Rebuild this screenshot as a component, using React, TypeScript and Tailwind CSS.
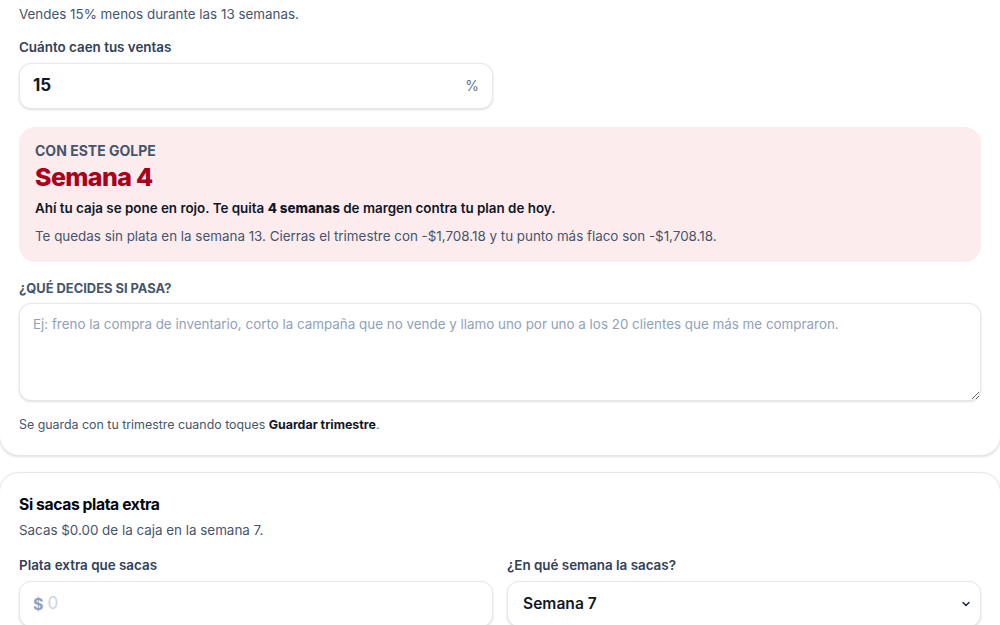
import { ChevronDown } from "lucide-react";

const font = { fontFamily: "Inter, 'Noto Sans', sans-serif" };

function Field({ label, children }: { label: string; children: React.ReactNode }) {
  return (
    <div className="flex flex-col">
      <label className="mb-1.5 text-[13.4px] leading-5 font-semibold text-slate-700">{label}</label>
      {children}
    </div>
  );
}

export default function App() {
  return (
    <div className="min-h-[625px] overflow-hidden bg-white" style={font}>
      <div className="-mx-px flex flex-col gap-4">
        {/* caída de ventas */}
        <section className="-mt-[17px] rounded-[20px] border border-gray-200 bg-white px-[19px] pt-5 pb-[22px] shadow-sm">
          <p className="text-[13.4px] leading-5 text-slate-600">Vendes 15% menos durante las 13 semanas.</p>

          <div className="mt-[13px] grid grid-cols-2 gap-3.5">
            <Field label="Cuánto caen tus ventas">
              <div className="flex h-[46px] items-center rounded-xl border border-gray-200 bg-white px-[13px] shadow-sm">
                <input
                  defaultValue="15"
                  className="w-full bg-transparent text-[17px] font-bold text-gray-900 outline-none"
                />
                <span className="text-sm text-slate-500">%</span>
              </div>
            </Field>
          </div>

          <div className="mt-[18px] rounded-2xl bg-[#fcecee] px-4 pt-[14px] pb-4">
            <p className="text-sm leading-5 font-bold uppercase text-slate-600">Con este golpe</p>
            <p className="text-[25px] leading-8 font-extrabold tracking-tight text-[#ab001b]">Semana 4</p>
            <p className="mt-[5px] text-[13.4px] leading-5 font-semibold text-gray-900">
              Ahí tu caja se pone en rojo. Te quita <span className="font-extrabold">4 semanas</span> de margen contra tu plan de hoy.
            </p>
            <p className="mt-2 text-[13.4px] leading-5 text-slate-600">
              Te quedas sin plata en la semana 13. Cierras el trimestre con -$1,708.18 y tu punto más flaco son -$1,708.18.
            </p>
          </div>

          <p className="mt-[19px] text-[12.9px] leading-4 font-bold uppercase text-slate-600">¿Qué decides si pasa?</p>
          <textarea
            className="mt-[6px] block h-[98px] w-full rounded-xl border border-gray-200 bg-white px-[13px] py-[10px] text-[13.4px] leading-5 text-gray-800 shadow-sm outline-none placeholder:text-slate-400"
            placeholder="Ej: freno la compra de inventario, corto la campaña que no vende y llamo uno por uno a los 20 clientes que más me compraron."
          />
          <p className="mt-4 text-[12.4px] leading-4 text-slate-600">
            Se guarda con tu trimestre cuando toques <span className="font-bold text-gray-900">Guardar trimestre</span>.
          </p>
        </section>

        {/* retiro extra */}
        <section className="rounded-[20px] border border-gray-200 bg-white px-[19px] pt-5 pb-5 shadow-sm">
          <h2 className="text-[15.7px] leading-6 font-bold tracking-tight text-gray-950">Si sacas plata extra</h2>
          <p className="mt-[3px] text-[13.4px] leading-5 text-slate-600">Sacas $0.00 de la caja en la semana 7.</p>

          <div className="mt-[15px] grid grid-cols-2 gap-3.5">
            <Field label="Plata extra que sacas">
              <div className="flex h-[46px] items-center gap-1 rounded-xl border border-gray-200 bg-white px-[13px] shadow-sm">
                <span className="text-base font-bold text-slate-400">$</span>
                <input
                  placeholder="0"
                  className="w-full bg-transparent text-[17px] font-bold text-gray-900 outline-none placeholder:font-normal placeholder:text-slate-300"
                />
              </div>
            </Field>
            <Field label="¿En qué semana la sacas?">
              <div className="relative">
                <select
                  defaultValue="7"
                  className="h-[46px] w-full appearance-none rounded-xl border border-gray-200 bg-white px-[15px] text-[15.6px] font-semibold text-gray-900 shadow-sm outline-none"
                >
                  {Array.from({ length: 13 }, (_, i) => (
                    <option key={i} value={String(i + 1)}>
                      Semana {i + 1}
                    </option>
                  ))}
                </select>
                <ChevronDown
                  size={12}
                  strokeWidth={3}
                  className="pointer-events-none absolute top-1/2 right-[9px] -translate-y-1/2 text-gray-800"
                />
              </div>
            </Field>
          </div>
        </section>
      </div>
    </div>
  );
}
